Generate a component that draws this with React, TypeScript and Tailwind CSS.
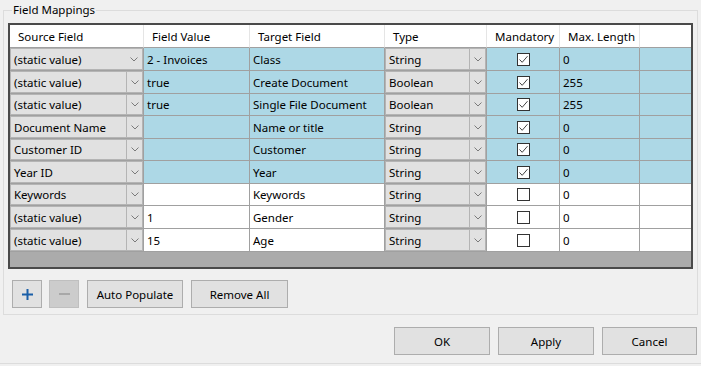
import React from 'react';

interface MappingRow {
  source: string;
  value: string;
  target: string;
  type: string;
  mandatory: boolean;
  maxLength: string;
  highlighted: boolean;
  height: string;
}

const rows: MappingRow[] = [
  { source: '(static value)', value: '2 - Invoices', target: 'Class', type: 'String', mandatory: true, maxLength: '0', highlighted: true, height: 'h-[23px]' },
  { source: '(static value)', value: 'true', target: 'Create Document', type: 'Boolean', mandatory: true, maxLength: '255', highlighted: true, height: 'h-[23px]' },
  { source: '(static value)', value: 'true', target: 'Single File Document', type: 'Boolean', mandatory: true, maxLength: '255', highlighted: true, height: 'h-[22px]' },
  { source: 'Document Name', value: '', target: 'Name or title', type: 'String', mandatory: true, maxLength: '0', highlighted: true, height: 'h-[23px]' },
  { source: 'Customer ID', value: '', target: 'Customer', type: 'String', mandatory: true, maxLength: '0', highlighted: true, height: 'h-[22px]' },
  { source: 'Year ID', value: '', target: 'Year', type: 'String', mandatory: true, maxLength: '0', highlighted: true, height: 'h-[23px]' },
  { source: 'Keywords', value: '', target: 'Keywords', type: 'String', mandatory: false, maxLength: '0', highlighted: false, height: 'h-[22px]' },
  { source: '(static value)', value: '1', target: 'Gender', type: 'String', mandatory: false, maxLength: '0', highlighted: false, height: 'h-[23px]' },
  { source: '(static value)', value: '15', target: 'Age', type: 'String', mandatory: false, maxLength: '0', highlighted: false, height: 'h-[23px]' },
];

const headers = ['Source Field', 'Field Value', 'Target Field', 'Type', 'Mandatory', 'Max. Length', ''];

const gridCols = 'grid grid-cols-[134px_106px_135px_102px_73px_80px_1fr]';

function Chevron() {
  return (
    <svg width="8" height="5" viewBox="0 0 8 5" className="block">
      <path d="M0.5 0.5 L4 4 L7.5 0.5" fill="none" stroke="#7a7a7a" strokeWidth="1" />
    </svg>
  );
}

function ComboCell({ text, divider }: { text: string; divider: boolean }) {
  return (
    <div className="flex h-full border-r border-b border-[#a0a0a0]">
      <div className="flex flex-1 items-center border border-[#b4b4b4] bg-[#e1e1e1]">
        <span className="flex-1 whitespace-nowrap pl-[3px]">{text}</span>
        <div className={`flex h-full w-[16px] items-center justify-center ${divider ? 'border-l border-[#b4b4b4]' : ''}`}>
          <Chevron />
        </div>
      </div>
    </div>
  );
}

function Checkbox({ checked }: { checked: boolean }) {
  return (
    <div className="flex h-[13px] w-[13px] items-center justify-center border border-[#333] bg-white">
      {checked && (
        <svg width="11" height="11" viewBox="0 0 11 11">
          <path d="M1.5 5.5 L4.2 8.3 L9.5 2.2" fill="none" stroke="#444" strokeWidth="1" />
        </svg>
      )}
    </div>
  );
}

function Button({ label, className }: { label: React.ReactNode; className: string }) {
  return (
    <div className={`flex h-[28px] items-center justify-center border border-[#adadad] bg-[#e1e1e1] ${className}`}>
      {label}
    </div>
  );
}

export default function App() {
  return (
    <div className="h-[366px] w-[701px] overflow-hidden bg-[#f0f0f0] font-['Segoe_UI','Noto_Sans',sans-serif] text-[11.5px] leading-[15px] text-black">
      <div className="px-[3px] pt-[10px]">
        <fieldset className="relative h-[305px] border border-[#dcdcdc] px-[4px] pt-[12px]">
          <legend className="absolute -top-[9px] left-[8px] bg-[#f0f0f0] px-[1px]">Field Mappings</legend>
          <div className="flex h-[246px] flex-col border-2 border-[#4a4a4a] bg-[#ababab]">
            <div className={`${gridCols} h-[23px] bg-white`}>
              {headers.map((h, i) => (
                <div key={i} className={`flex items-center border-b border-[#a0a0a0] pl-[8px] ${i < 6 ? 'border-r border-r-[#e5e5e5]' : ''}`}>
                  {h}
                </div>
              ))}
            </div>
            {rows.map((r, i) => {
              const bg = r.highlighted ? 'bg-[#add8e6]' : 'bg-white';
              return (
                <div key={i} className={`${gridCols} ${r.height}`}>
                  <ComboCell text={r.source} divider={i !== 0} />
                  <div className={`flex items-center border-r border-b border-[#a0a0a0] pl-[3px] ${bg}`}>{r.value}</div>
                  <div className={`flex items-center border-r border-b border-[#a0a0a0] pl-[3px] ${bg}`}>{r.target}</div>
                  <ComboCell text={r.type} divider />
                  <div className={`flex items-center justify-center border-r border-b border-[#a0a0a0] ${bg}`}>
                    <Checkbox checked={r.mandatory} />
                  </div>
                  <div className={`flex items-center border-r border-b border-[#a0a0a0] pl-[3px] ${bg}`}>{r.maxLength}</div>
                  <div className={`border-b border-[#a0a0a0] ${bg}`} />
                </div>
              );
            })}
          </div>
          <div className="mt-[11px] flex items-center pl-[4px]">
            <Button
              className="w-[30px]"
              label={
                <svg width="11" height="11" viewBox="0 0 11 11">
                  <path d="M5.5 0 V11 M0 5.5 H11" stroke="#1a5fa8" strokeWidth="2" />
                </svg>
              }
            />
            <div className="ml-[7px] flex h-[28px] w-[30px] items-center justify-center border border-[#bfbfbf] bg-[#cccccc]">
              <div className="h-[2px] w-[11px] bg-[#a8a8a8]" />
            </div>
            <Button className="ml-[8px] w-[96px]" label="Auto Populate" />
            <Button className="ml-[8px] w-[97px]" label="Remove All" />
          </div>
        </fieldset>
      </div>
      <div className="mt-[12px] flex justify-end gap-[8px] pr-[4px]">
        <Button className="w-[96px]" label="OK" />
        <Button className="w-[96px]" label="Apply" />
        <Button className="w-[95px]" label="Cancel" />
      </div>
      <div className="mt-[8px] border-t border-[#dcdcdc]" />
    </div>
  );
}
